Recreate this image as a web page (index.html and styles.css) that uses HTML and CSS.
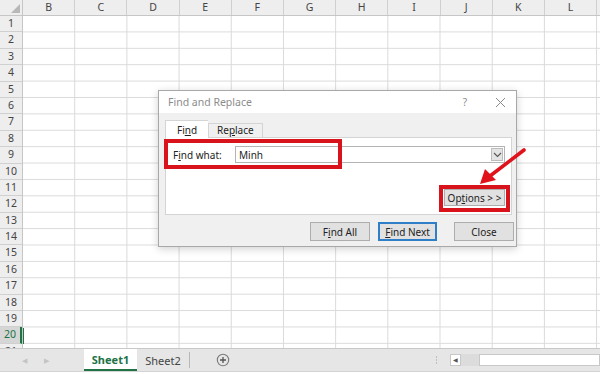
FILE: index.html
```html
<!DOCTYPE html>
<html lang="en">
  <head>
    <meta charset="UTF-8" />
    <title>Find and Replace</title>
    <link rel="stylesheet" href="styles.css">
  </head>
  <body>
    <div class="window">
      <div class="sheet">
        <div class="corner">
          <svg width="23" height="16" viewBox="0 0 23 16"><polygon points="20,4 20,13 11,13" fill="#b8b8b8"/></svg>
        </div>
        <div class="col-heads">
          <div class="col-head">B</div>
          <div class="col-head">C</div>
          <div class="col-head">D</div>
          <div class="col-head">E</div>
          <div class="col-head">F</div>
          <div class="col-head">G</div>
          <div class="col-head">H</div>
          <div class="col-head">I</div>
          <div class="col-head">J</div>
          <div class="col-head">K</div>
          <div class="col-head">L</div>
        </div>
        <div class="row-heads">
          <div class="row-head">1</div>
          <div class="row-head">2</div>
          <div class="row-head">3</div>
          <div class="row-head">4</div>
          <div class="row-head">5</div>
          <div class="row-head">6</div>
          <div class="row-head">7</div>
          <div class="row-head">8</div>
          <div class="row-head">9</div>
          <div class="row-head">10</div>
          <div class="row-head">11</div>
          <div class="row-head">12</div>
          <div class="row-head">13</div>
          <div class="row-head">14</div>
          <div class="row-head">15</div>
          <div class="row-head">16</div>
          <div class="row-head">17</div>
          <div class="row-head">18</div>
          <div class="row-head">19</div>
          <div class="row-head active">20</div>
          <div class="row-head">21</div>
        </div>
        <div class="cells">
          <div class="active-cell"></div>
        </div>
      </div>

      <div class="tabbar">
        <div class="tab-nav">
          <span class="nav-arrow">&#9664;</span>
          <span class="nav-arrow">&#9654;</span>
        </div>
        <div class="sheet-tab selected">Sheet1</div>
        <div class="sheet-tab">Sheet2</div>
        <div class="add-sheet">
          <svg width="14" height="14" viewBox="0 0 14 14">
            <circle cx="7" cy="7" r="5.7" fill="none" stroke="#7a7a7a" stroke-width="1.1"/>
            <path d="M7 4v6M4 7h6" stroke="#555" stroke-width="1.3"/>
          </svg>
        </div>
        <div class="tab-spacer"></div>
        <div class="split-dots"></div>
        <div class="hscroll">
          <div class="hscroll-btn">&#9664;</div>
          <div class="hscroll-gap"></div>
          <div class="hscroll-track"></div>
        </div>
      </div>

      <div class="dialog">
        <div class="dialog-title">
          <span class="title-text">Find and Replace</span>
          <span class="title-help">?</span>
          <span class="title-close">
            <svg width="11" height="11" viewBox="0 0 11 11"><path d="M1 1l9 9M10 1l-9 9" stroke="#8a8a8a" stroke-width="1"/></svg>
          </span>
        </div>
        <div class="dialog-body">
          <div class="tabs">
            <div class="tab current">Fi<u>n</u>d</div>
            <div class="tab">Re<u>p</u>lace</div>
          </div>
          <div class="panel">
            <div class="find-row">
              <label class="find-label">F<u>i</u>nd what:</label>
              <div class="find-input">
                <span class="find-value">Minh</span>
                <span class="drop-btn">
                  <svg width="9" height="6" viewBox="0 0 9 6"><path d="M1 1l3.5 3.5L8 1" fill="none" stroke="#555" stroke-width="1.1"/></svg>
                </span>
              </div>
            </div>
            <div class="options-row">
              <button class="btn options-btn">Op<u>t</u>ions &gt; &gt;</button>
            </div>
            <div class="mark mark-find"></div>
            <div class="mark mark-options"></div>
          </div>
          <div class="buttons">
            <button class="btn">F<u>i</u>nd All</button>
            <button class="btn default"><u>F</u>ind Next</button>
            <button class="btn close-btn">Close</button>
          </div>
        </div>
      </div>

      <svg class="arrow" width="600" height="374" viewBox="0 0 600 374">
        <path d="M524 150L490 176" stroke="#e0121b" stroke-width="3.6" stroke-linecap="round"/>
        <polygon points="480,184 485,169 496,180" fill="#e0121b"/>
      </svg>
    </div>
  </body>
</html>
```

FILE: styles.css
```css
* {
  margin: 0;
  padding: 0;
  box-sizing: border-box;
}

body {
  font-family: "Noto Sans", "Open Sans", sans-serif;
  background: #ffffff;
  color: #333;
}

.window {
  position: relative;
  width: 600px;
  height: 374px;
  overflow: hidden;
  display: flex;
  flex-direction: column;
}

/* ---------- grid ---------- */

.sheet {
  display: grid;
  grid-template-columns: 23px 1fr;
  grid-template-rows: 16px 1fr;
  height: 348px;
  overflow: hidden;
}

.corner {
  background: #eeeeee;
  border-right: 1px solid #c6c6c6;
  border-bottom: 1px solid #c6c6c6;
}

.corner svg {
  display: block;
}

.col-heads {
  display: flex;
  background: #eeeeee;
  border-bottom: 1px solid #c6c6c6;
}

.col-head {
  flex: 0 0 52.2px;
  border-right: 1px solid #d0d0d0;
  font-size: 10.5px;
  line-height: 15px;
  text-align: center;
  color: #444;
}

.row-heads {
  background: #eeeeee;
  border-right: 1px solid #c6c6c6;
}

.row-head {
  height: 16.4px;
  border-bottom: 1px solid #d0d0d0;
  font-size: 10.5px;
  line-height: 15.4px;
  text-align: center;
  color: #444;
}

.row-head.active {
  background: #d6d6d6;
  color: #217346;
  border-right: 2px solid #217346;
}

.cells {
  position: relative;
  background-image:
    linear-gradient(to right, transparent calc(100% - 1px), #dadada 0),
    linear-gradient(to bottom, transparent calc(100% - 1px), #dadada 0);
  background-size: 52.2px 100%, 100% 16.4px;
}

.active-cell {
  position: absolute;
  left: 0;
  top: 311.6px;
  width: 1px;
  height: 16.4px;
  background: #217346;
}

/* ---------- sheet tabs ---------- */

.tabbar {
  display: flex;
  align-items: stretch;
  height: 24px;
  background: #e6e6e6;
  border-top: 1px solid #c8c8c8;
  border-bottom: 1px solid #d4d4d4;
  font-size: 11px;
}

.tab-nav {
  width: 84px;
  display: flex;
  align-items: center;
  gap: 17px;
  padding-left: 22px;
}

.nav-arrow {
  font-size: 7px;
  color: #c4c4c4;
}

.sheet-tab {
  width: 53px;
  display: flex;
  align-items: center;
  justify-content: center;
  color: #444;
  border-right: 1px solid #b8b8b8;
  margin: 3px 0;
}

.sheet-tab.selected {
  background: #ffffff;
  color: #217346;
  font-weight: bold;
  border-right: none;
  border-bottom: 2px solid #217346;
  margin: 0;
}

.add-sheet {
  width: 66px;
  display: flex;
  align-items: center;
  justify-content: center;
}

.add-sheet svg {
  display: block;
}

.tab-spacer {
  flex: 1;
}

.split-dots {
  width: 15px;
  background-image: radial-gradient(circle, #9a9a9a 0.8px, transparent 1px);
  background-size: 3px 3px;
  background-repeat: repeat-y;
  background-position: 0 center;
  margin: 7px 0;
}

.hscroll {
  width: 150px;
  display: flex;
  align-items: center;
}

.hscroll-btn {
  width: 11px;
  height: 12px;
  background: #ffffff;
  border: 1px solid #c8c8c8;
  font-size: 6px;
  line-height: 10px;
  text-align: center;
  color: #555;
}

.hscroll-gap {
  width: 18px;
  height: 12px;
  background: #dcdcdc;
}

.hscroll-track {
  flex: 1;
  height: 12px;
  background: #ffffff;
  border: 1px solid #c8c8c8;
}

/* ---------- dialog ---------- */

.dialog {
  position: absolute;
  left: 158px;
  top: 90px;
  width: 359px;
  height: 157px;
  background: #f0f0f0;
  border: 1px solid #a8a8a8;
  box-shadow: 0 2px 8px rgba(0, 0, 0, 0.18);
  display: flex;
  flex-direction: column;
  font-size: 10px;
  color: #222;
}

.dialog-title {
  height: 22px;
  background: #ffffff;
  display: flex;
  align-items: center;
  padding: 0 10px 0 9px;
  color: #8c8c8c;
}

.title-text {
  flex: 1;
  font-size: 10.5px;
}

.title-help {
  font-size: 10px;
  margin-right: 28px;
}

.title-close svg {
  display: block;
}

.dialog-body {
  padding: 7px 4px 0 6px;
  display: flex;
  flex-direction: column;
}

.tabs {
  display: flex;
  align-items: flex-end;
  height: 17px;
}

.tab {
  height: 14px;
  padding: 0 8px;
  border: 1px solid #d4d4d4;
  border-bottom: none;
  line-height: 13px;
  background: #f0f0f0;
}

.tab.current {
  height: 18px;
  width: 43px;
  text-align: center;
  padding: 3px 0 0;
  background: #ffffff;
  border-right: none;
  position: relative;
  z-index: 1;
  margin-bottom: -1px;
}

.panel {
  position: relative;
  height: 78px;
  background: #ffffff;
  border: 1px solid #d4d4d4;
  padding: 8px 6px 0 6px;
}

.find-row {
  display: flex;
  align-items: center;
}

.find-label {
  width: 63px;
  padding-left: 1px;
}

.find-input {
  flex: 1;
  height: 17px;
  border: 1px solid #b4b4b4;
  display: flex;
  align-items: center;
  padding-left: 3px;
}

.find-value {
  flex: 1;
}

.drop-btn {
  width: 12px;
  height: 13px;
  margin-right: 1px;
  background: #e4e4e4;
  border: 1px solid #bcbcbc;
  display: flex;
  align-items: center;
  justify-content: center;
}

.drop-btn svg {
  display: block;
}

.options-row {
  display: flex;
  justify-content: flex-end;
  margin-top: 26px;
}

.btn {
  font-family: inherit;
  font-size: 10px;
  color: #222;
  height: 19px;
  width: 60px;
  background: #e1e1e1;
  border: 1px solid #adadad;
}

.options-btn {
  width: 61px;
  height: 17px;
}

.btn.default {
  border: 2px solid #2e7fc7;
  width: 59px;
}

.buttons {
  display: flex;
  justify-content: flex-end;
  gap: 8px;
  margin-top: 7px;
  margin-right: -2px;
}

.close-btn {
  margin-left: 9px;
}

/* ---------- annotations ---------- */

.mark {
  position: absolute;
  border: 4px solid #d9131c;
}

.mark-find {
  left: -2px;
  top: 1px;
  width: 178px;
  height: 30px;
}

.mark-options {
  right: 1px;
  top: 47px;
  width: 71px;
  height: 27px;
}

.arrow {
  position: absolute;
  left: 0;
  top: 0;
  pointer-events: none;
}
```
